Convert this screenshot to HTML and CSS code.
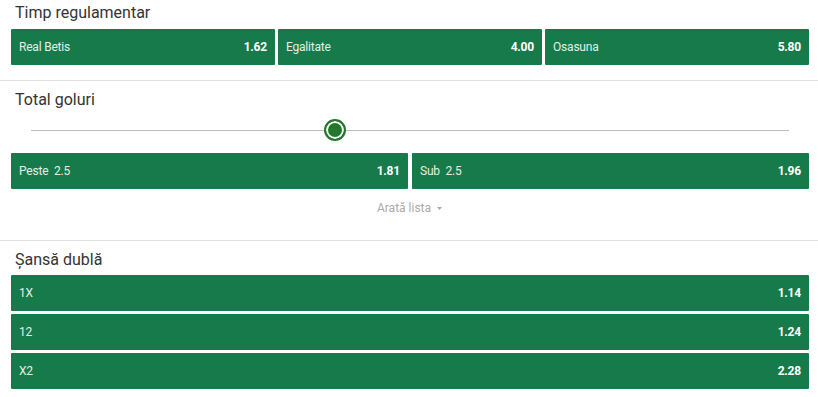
FILE: index.html
```html
<!DOCTYPE html>
<html lang="ro">
<head>
<meta charset="utf-8">
<title>Piețe</title>
<link rel="stylesheet" href="styles.css">
</head>
<body>
<section class="market market-first">
  <h2 class="market-title">Timp regulamentar</h2>
  <div class="odds-row cols-3">
    <button class="odd"><span class="odd-label">Real Betis</span><span class="odd-value">1.62</span></button>
    <button class="odd"><span class="odd-label">Egalitate</span><span class="odd-value">4.00</span></button>
    <button class="odd"><span class="odd-label">Osasuna</span><span class="odd-value">5.80</span></button>
  </div>
</section>
<section class="market market-goals">
  <h2 class="market-title">Total goluri</h2>
  <div class="slider">
    <div class="slider-track"></div>
    <div class="slider-knob"></div>
  </div>
  <div class="odds-row cols-2">
    <button class="odd"><span class="odd-label">Peste&nbsp; 2.5</span><span class="odd-value">1.81</span></button>
    <button class="odd"><span class="odd-label">Sub&nbsp; 2.5</span><span class="odd-value">1.96</span></button>
  </div>
  <div class="show-list">Arată lista <svg class="caret" width="7" height="5" viewBox="0 0 7 5"><path d="M1 1 L6 1 L3.5 4 Z" fill="#aaa"/></svg></div>
</section>
<section class="market market-double">
  <h2 class="market-title">Șansă dublă</h2>
  <div class="odds-col">
    <button class="odd"><span class="odd-label">1X</span><span class="odd-value">1.14</span></button>
    <button class="odd"><span class="odd-label">12</span><span class="odd-value">1.24</span></button>
    <button class="odd"><span class="odd-label">X2</span><span class="odd-value">2.28</span></button>
  </div>
</section>
</body>
</html>
```
FILE: styles.css
```css
* { box-sizing: border-box; }
html, body { margin: 0; padding: 0; background: #fff; }
body {
  font-family: Roboto, "Liberation Sans", sans-serif;
  color: #333;
  width: 818px;
}
.market {
  padding: 8px 9px 15px 11px;
  border-top: 1px solid #dedede;
}
.market-first {
  border-top: none;
  padding-top: 2px;
}
.market-goals { padding-bottom: 21px; }
.market-double .market-title { margin-bottom: 4px; }
.market-title {
  margin: 0 0 5px 4px;
  font-size: 16px;
  line-height: 22px;
  font-weight: 400;
  color: #333;
}
.odds-row {
  display: grid;
  gap: 3px;
}
.cols-3 { grid-template-columns: 1fr 1fr 1fr; }
.cols-2 { grid-template-columns: 1fr 1fr; gap: 4px; }
.odds-col {
  display: flex;
  flex-direction: column;
  gap: 3px;
}
.odd {
  display: flex;
  align-items: center;
  justify-content: space-between;
  height: 36px;
  padding: 0 8px;
  border: none;
  border-radius: 1px;
  background: #177a4a;
  font-family: Roboto, "Liberation Sans", sans-serif;
  font-size: 12px;
  letter-spacing: -0.2px;
  cursor: pointer;
  width: 100%;
}
.odd-label { color: #e3f0e8; }
.odd-value { color: #fff; font-weight: 700; }
.slider {
  position: relative;
  height: 38px;
  margin: -5px 20px 4px 20px;
}
.slider-track {
  position: absolute;
  left: 0; right: 0;
  top: 19px;
  height: 1px;
  background: #bdbdbd;
}
.slider-knob {
  position: absolute;
  left: 293px;
  top: 8px;
  width: 22px;
  height: 22px;
  border-radius: 50%;
  border: 2px solid #23782d;
  background: #23782d;
  box-shadow: inset 0 0 0 2px #fff;
}
.show-list {
  margin-top: 8px;
  text-align: center;
  font-size: 12px;
  line-height: 22px;
  color: #aaa;
}
.caret { margin-left: 2px; vertical-align: middle; }
```
